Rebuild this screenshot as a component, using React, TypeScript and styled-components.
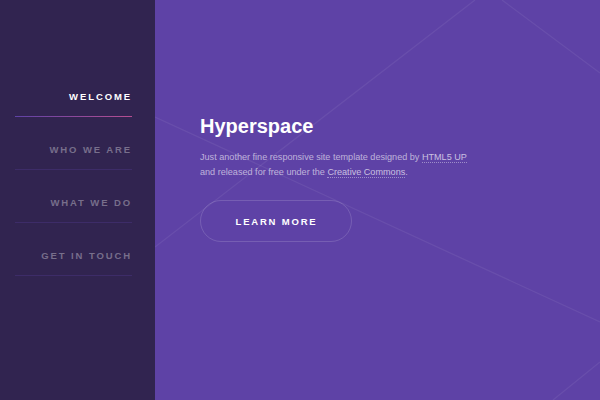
import React from "react";
import styled, { createGlobalStyle } from "styled-components";

const Global = createGlobalStyle`
  html, body { margin: 0; padding: 0; }
  body {
    font-family: "Liberation Sans", Arial, Helvetica, sans-serif;
    background: #5e42a6;
  }
  * { box-sizing: border-box; }
`;

const Page = styled.div`
  display: flex;
  width: 600px;
  height: 400px;
  overflow: hidden;
`;

const Sidebar = styled.aside`
  width: 155px;
  flex: none;
  background: #312450;
  padding: 64px 23px 0 15px;
`;

const NavList = styled.nav`
  display: flex;
  flex-direction: column;
`;

const NavItem = styled.a<{ $active?: boolean }>`
  display: block;
  padding: 28px 0 14px;
  font-size: 9.5px;
  line-height: 10px;
  font-weight: bold;
  letter-spacing: 1.9px;
  text-transform: uppercase;
  text-align: right;
  color: ${(p) => (p.$active ? "#ffffff" : "rgba(255,255,255,0.35)")};
  border-bottom: 1px solid transparent;
  border-image: ${(p) =>
    p.$active
      ? "linear-gradient(to right, #5e42a6, #b74e91) 1"
      : "linear-gradient(to right, #3d2c68, #3d2c68) 1"};
  text-decoration: none;
`;

const Main = styled.main`
  position: relative;
  flex: 1;
  background: #5e42a6;
  padding: 114px 0 0 45px;
`;

const Backdrop = styled.svg`
  position: absolute;
  inset: 0;
  width: 100%;
  height: 100%;
  pointer-events: none;
`;

const Content = styled.div`
  position: relative;
`;

const Title = styled.h1`
  margin: 0;
  font-size: 20px;
  line-height: 24px;
  font-weight: bold;
  color: #ffffff;
`;

const Lead = styled.p`
  margin: 12px 0 0;
  font-size: 9.1px;
  line-height: 15px;
  color: rgba(255, 255, 255, 0.6);
`;

const Link = styled.a`
  color: rgba(255, 255, 255, 0.68);
  text-decoration: none;
  border-bottom: 1px dotted rgba(255, 255, 255, 0.4);
`;

const Button = styled.a`
  display: flex;
  align-items: center;
  justify-content: center;
  margin-top: 20px;
  width: 152px;
  height: 42px;
  border-radius: 21px;
  border: 1px solid rgba(255, 255, 255, 0.15);
  color: #ffffff;
  font-size: 9.5px;
  font-weight: bold;
  letter-spacing: 1.8px;
  text-transform: uppercase;
  text-decoration: none;
  padding-left: 1px;
`;

const items = ["Welcome", "Who we are", "What we do", "Get in touch"];

export default function App() {
  return (
    <>
      <Global />
      <Page>
        <Sidebar>
          <NavList>
            {items.map((t, i) => (
              <NavItem key={t} $active={i === 0}>
                {t}
              </NavItem>
            ))}
          </NavList>
        </Sidebar>
        <Main>
          <Backdrop viewBox="0 0 445 400" preserveAspectRatio="none">
            <g stroke="rgba(255,255,255,0.065)" strokeWidth="1.3" fill="none">
              <line x1="320" y1="0" x2="0" y2="247" />
              <line x1="0" y1="117" x2="445" y2="322" />
              <line x1="347" y1="0" x2="445" y2="73" />
              <line x1="398" y1="400" x2="445" y2="362" />
            </g>
          </Backdrop>
          <Content>
            <Title>Hyperspace</Title>
            <Lead>
              Just another fine responsive site template designed by <Link>HTML5 UP</Link>
              <br />
              and released for free under the <Link>Creative Commons</Link>.
            </Lead>
            <Button>Learn More</Button>
          </Content>
        </Main>
      </Page>
    </>
  );
}
